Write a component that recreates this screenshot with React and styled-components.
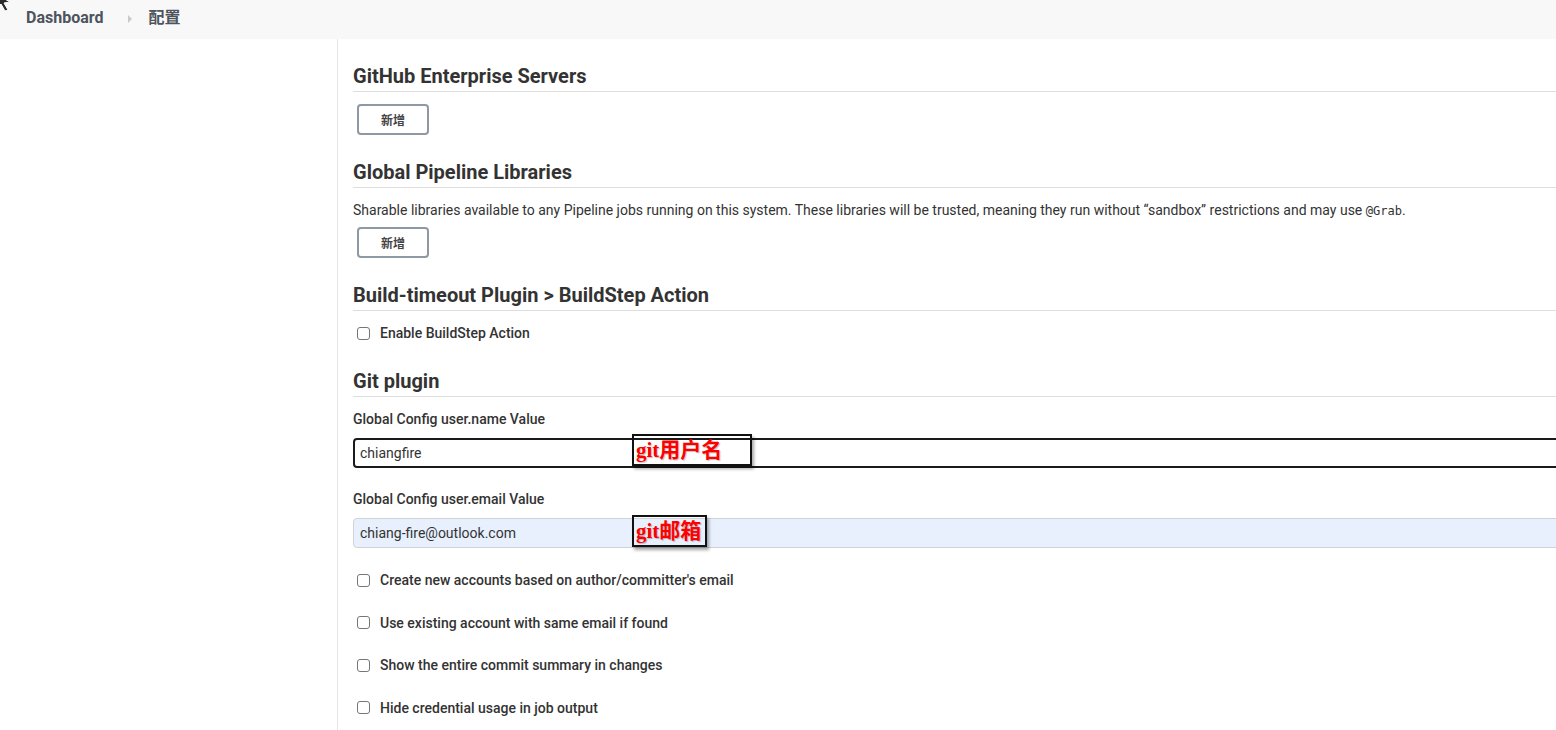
import React from "react";
import styled, { createGlobalStyle } from "styled-components";

const GlobalStyle = createGlobalStyle`
  html, body {
    margin: 0;
    padding: 0;
    background: #fff;
    overflow: hidden;
  }
  body {
    font-family: Roboto, "Noto Sans CJK SC", sans-serif;
    color: #333;
  }
`;

const Page = styled.div`
  width: 1556px;
  height: 730px;
  display: flex;
  flex-direction: column;
  position: relative;
  overflow: hidden;
`;

const TopBar = styled.div`
  height: 39px;
  box-sizing: border-box;
  padding: 0 0 3px 26px;
  flex: none;
  background: #f8f8f8;
  display: flex;
  align-items: center;
`;

const Crumb = styled.span`
  font-size: 16px;
  font-weight: 700;
  line-height: 16px;
  color: #4d545d;
`;

const CrumbSep = styled.span`
  width: 0;
  height: 0;
  border-top: 4px solid transparent;
  border-bottom: 4px solid transparent;
  border-left: 4px solid #c9c9c9;
  margin: 2px 16px 0 25px;
`;

const Cursor = styled.svg`
  position: absolute;
  left: -5px;
  top: -7px;
`;

const Body = styled.div`
  flex: 1;
  display: flex;
`;

const Sidebar = styled.aside`
  width: 337px;
  flex: none;
  border-right: 1px solid #e6e6e6;
`;

const Main = styled.main`
  flex: 1;
  padding: 25px 0 0 15px;
  min-width: 0;
`;

const Heading = styled.h2`
  margin: ${({ $top }) => $top || 0}px 0 0;
  font-size: 20px;
  font-weight: 700;
  line-height: 24px;
  padding-bottom: 3px;
  border-bottom: 1px solid #dedede;
  color: #333;
`;

const AddButton = styled.button`
  margin: ${({ $top }) => $top}px 0 0 4px;
  width: 72px;
  height: 31px;
  background: #fff;
  border: 2px solid #8e99a3;
  border-radius: 4px;
  font-family: Roboto, "Noto Sans CJK SC", sans-serif;
  font-size: 12px;
  font-weight: 700;
  color: #444;
  display: block;
`;

const Description = styled.p`
  margin: 12px 0 0;
  font-size: 14px;
  line-height: 20px;
  height: 20px;
  color: #333;

  code {
    font-family: "DejaVu Sans Mono", monospace;
    font-size: 12px;
    line-height: 12px;
  }
`;

const CheckRow = styled.label`
  display: flex;
  align-items: center;
  gap: 10px;
  margin: ${({ $top }) => $top}px 0 0 4px;
  height: 20px;
  font-size: 14px;
  font-weight: 500;
  color: #333;
`;

const Box = styled.span`
  width: 11px;
  height: 11px;
  border: 1px solid #767676;
  border-radius: 3px;
  background: #fff;
  flex: none;
`;

const FieldLabel = styled.div`
  margin-top: ${({ $top }) => $top}px;
  font-size: 14px;
  font-weight: 500;
  line-height: 20px;
  color: #333;
`;

const FieldWrap = styled.div`
  position: relative;
  margin-top: 9px;
  width: calc(100% + 20px);
`;

const TextInput = styled.div`
  box-sizing: border-box;
  height: 30px;
  display: flex;
  align-items: center;
  padding-left: ${({ $focused }) => ($focused ? 5 : 6)}px;
  border: ${({ $focused }) => ($focused ? "2px solid #1a1a1a" : "1px solid #cfd3d8")};
  border-radius: 4px;
  background: ${({ $filled }) => ($filled ? "#e8f0fe" : "#fff")};
  font-size: 14px;
  color: #333;
`;

const Note = styled.div`
  position: absolute;
  left: 279px;
  top: ${({ $top }) => $top}px;
  box-sizing: border-box;
  width: ${({ $w }) => $w}px;
  height: 32px;
  border: 2px solid #111;
  box-shadow: 2px 3px 3px rgba(0, 0, 0, 0.35);
  display: flex;
  align-items: flex-end;
  padding: 0 0 2px 2px;
  font-family: "Liberation Serif", "Noto Sans CJK SC", serif;
  font-size: 21px;
  font-weight: 700;
  line-height: 24px;
  color: #f00;
  text-shadow: 1px 1px 1px rgba(0, 0, 0, 0.25);
`;

const gitOptions = [
  "Create new accounts based on author/committer's email",
  "Use existing account with same email if found",
  "Show the entire commit summary in changes",
  "Hide credential usage in job output",
];

export default function App() {
  return (
    <Page>
      <GlobalStyle />
      <Cursor width="18" height="20" viewBox="0 0 18 20">
        <path d="M1 1 L15 9 L9 10 L13 17 L10 18 L6 11 L2 15 Z" fill="#2a2a2a" stroke="#fff" strokeWidth="1" />
      </Cursor>
      <TopBar>
        <Crumb>Dashboard</Crumb>
        <CrumbSep />
        <Crumb>配置</Crumb>
      </TopBar>
      <Body>
        <Sidebar />
        <Main>
          <Heading>GitHub Enterprise Servers</Heading>
          <AddButton $top={12}>新增</AddButton>

          <Heading $top={25}>Global Pipeline Libraries</Heading>
          <Description>
            Sharable libraries available to any Pipeline jobs running on this system. These libraries will be
            trusted, meaning they run without “sandbox” restrictions and may use <code>@Grab</code>.
          </Description>
          <AddButton $top={7}>新增</AddButton>

          <Heading $top={25}>Build-timeout Plugin &gt; BuildStep Action</Heading>
          <CheckRow $top={12}>
            <Box />
            Enable BuildStep Action
          </CheckRow>

          <Heading $top={26}>Git plugin</Heading>
          <FieldLabel $top={12}>Global Config user.name Value</FieldLabel>
          <FieldWrap>
            <TextInput $focused>chiangfire</TextInput>
            <Note $top={-4} $w={120}>git用户名</Note>
          </FieldWrap>
          <FieldLabel $top={21}>Global Config user.email Value</FieldLabel>
          <FieldWrap>
            <TextInput $filled>chiang-fire@outlook.com</TextInput>
            <Note $top={-3} $w={75}>git邮箱</Note>
          </FieldWrap>
          {gitOptions.map((opt, i) => (
            <CheckRow key={opt} $top={i === 0 ? 22 : 22.5}>
              <Box />
              {opt}
            </CheckRow>
          ))}
        </Main>
      </Body>
    </Page>
  );
}
